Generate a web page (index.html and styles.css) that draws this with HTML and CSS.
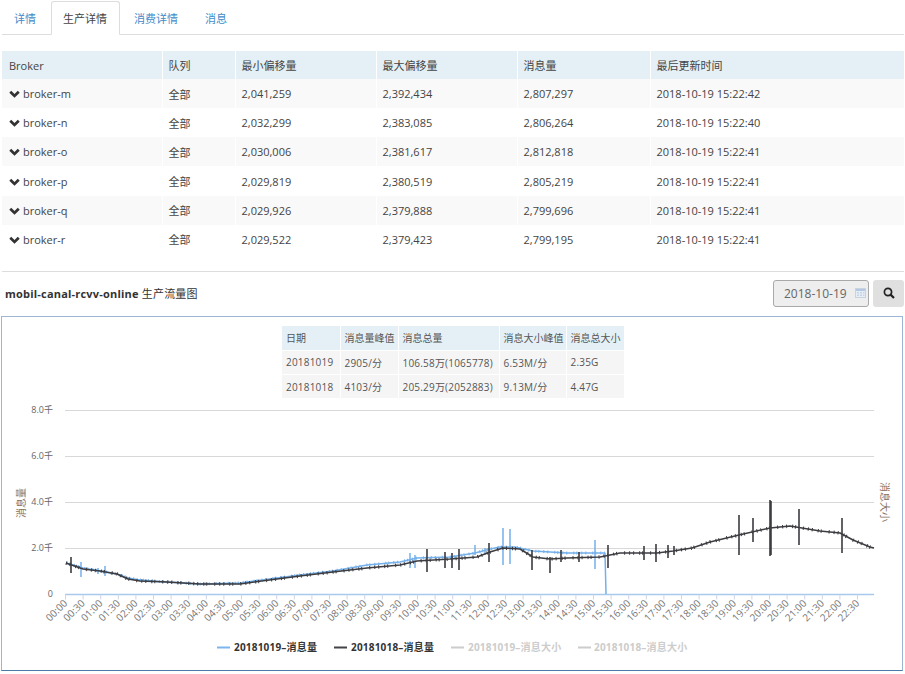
FILE: index.html
```html
<!DOCTYPE html>
<html lang="zh">
<head>
<meta charset="utf-8">
<title>生产详情</title>
<link rel="stylesheet" href="styles.css">
</head>
<body>
<ul class="tabs">
  <li class="tab"><a>详情</a></li>
  <li class="tab active"><a>生产详情</a></li>
  <li class="tab"><a>消费详情</a></li>
  <li class="tab"><a>消息</a></li>
</ul>
<table class="brokers">
  <colgroup><col class="c1"><col class="c2"><col class="c3"><col class="c4"><col class="c5"><col class="c6"></colgroup>
  <thead><tr><th>Broker</th><th>队列</th><th>最小偏移量</th><th>最大偏移量</th><th>消息量</th><th>最后更新时间</th></tr></thead>
  <tbody>
    <tr><td><svg class="chev" viewBox="0 0 11 8"><path d="M0.300 2.700 2.200 0.800 5.500 4 8.800 0.800 10.700 2.700 5.500 7.800z"/></svg>broker-m</td><td>全部</td><td>2,041,259</td><td>2,392,434</td><td>2,807,297</td><td>2018-10-19 15:22:42</td></tr>
    <tr><td><svg class="chev" viewBox="0 0 11 8"><path d="M0.300 2.700 2.200 0.800 5.500 4 8.800 0.800 10.700 2.700 5.500 7.800z"/></svg>broker-n</td><td>全部</td><td>2,032,299</td><td>2,383,085</td><td>2,806,264</td><td>2018-10-19 15:22:40</td></tr>
    <tr><td><svg class="chev" viewBox="0 0 11 8"><path d="M0.300 2.700 2.200 0.800 5.500 4 8.800 0.800 10.700 2.700 5.500 7.800z"/></svg>broker-o</td><td>全部</td><td>2,030,006</td><td>2,381,617</td><td>2,812,818</td><td>2018-10-19 15:22:41</td></tr>
    <tr><td><svg class="chev" viewBox="0 0 11 8"><path d="M0.300 2.700 2.200 0.800 5.500 4 8.800 0.800 10.700 2.700 5.500 7.800z"/></svg>broker-p</td><td>全部</td><td>2,029,819</td><td>2,380,519</td><td>2,805,219</td><td>2018-10-19 15:22:41</td></tr>
    <tr><td><svg class="chev" viewBox="0 0 11 8"><path d="M0.300 2.700 2.200 0.800 5.500 4 8.800 0.800 10.700 2.700 5.500 7.800z"/></svg>broker-q</td><td>全部</td><td>2,029,926</td><td>2,379,888</td><td>2,799,696</td><td>2018-10-19 15:22:41</td></tr>
    <tr><td><svg class="chev" viewBox="0 0 11 8"><path d="M0.300 2.700 2.200 0.800 5.500 4 8.800 0.800 10.700 2.700 5.500 7.800z"/></svg>broker-r</td><td>全部</td><td>2,029,522</td><td>2,379,423</td><td>2,799,195</td><td>2018-10-19 15:22:41</td></tr>
  </tbody>
</table>
<div class="toolbar">
  <div class="title"><b>mobil-canal-rcvv-online</b> 生产流量图</div>
  <div class="controls">
    <div class="date">
      <span>2018-10-19</span>
      <svg class="cal" viewBox="0 0 11 10"><rect x="0.5" y="0.5" width="10" height="9" fill="#e8eef6" stroke="#c9d3e0"/><rect x="1" y="1" width="9" height="2" fill="#b3c8e2"/><path d="M2 4h2v1.500h-2zM5 4h2v1.500h-2zM8 4h1.500v1.500h-1.500zM2 6.500h2v1.500h-2zM5 6.500h2v1.500h-2zM8 6.500h1.500v1.500h-1.500z" fill="#c4d4e8"/></svg>
    </div>
    <button class="search" type="button"><svg viewBox="0 0 12 12"><circle cx="5" cy="5" r="3.600" fill="none" stroke="#222" stroke-width="1.700"/><path d="M7.600 7.600 11 11" stroke="#222" stroke-width="2.200" fill="none"/></svg></button>
  </div>
</div>
<section class="panel">
  <table class="stats">
    <colgroup><col class="s1"><col class="s2"><col class="s3"><col class="s4"><col class="s5"></colgroup>
    <thead><tr><th>日期</th><th>消息量峰值</th><th>消息总量</th><th>消息大小峰值</th><th>消息总大小</th></tr></thead>
    <tbody>
      <tr><td>20181019</td><td>2905/分</td><td>106.58万(1065778)</td><td>6.53M/分</td><td>2.35G</td></tr>
      <tr><td>20181018</td><td>4103/分</td><td>205.29万(2052883)</td><td>9.13M/分</td><td>4.47G</td></tr>
    </tbody>
  </table>
  <svg class="chart" viewBox="2 399 900 271">
    <path class="grid" d="M65 410.500H874M65 456.500H874M65 502.500H874M65 548.500H874"/>
    <path class="axis" d="M65 594.500H874"/>
    <line class="ticks" x1="65" y1="597" x2="874" y2="597"/>

    <text class="ylab" x="53" y="413">8.0千</text>
    <text class="ylab" x="53" y="459">6.0千</text>
    <text class="ylab" x="53" y="505">4.0千</text>
    <text class="ylab" x="53" y="551">2.0千</text>
    <text class="ylab" x="53" y="597">0</text>
    <text class="yname" transform="translate(25 503) rotate(-90)">消息量</text>
    <text class="yname" transform="translate(881 502) rotate(90)">消息大小</text>

    <path class="blue" d="M66 563 83 568 100 571 117 574 128 578 140 580 167 582 200 584 240 583 277 578 300 575 333 571 367 565 400 562 417 558 450 557 475 553 490 549 500 547 515 547 533 551 550 552 567 553 590 553 605 553 606 594"/>
    <path class="blue fuzz" d="M66 563 83 568 100 571 117 574 128 578 140 580 167 582 200 584 240 583 277 578 300 575 333 571 367 565 400 562 417 558 450 557 475 553 490 549 500 547 515 547 533 551 550 552 567 553 590 553 605 553"/>
    <path class="bluespike" d="M81 562V577M105 566V576M98 568V574M410 553V568M415 555V568M475 545V555M485 548V555M503 528V565M510 529V564M595 540V569"/>
    <path class="black" d="M66 563 83 569 100 571 117 574 128 579 140 581 167 582 200 584 240 584 277 579 300 576 333 572 367 568 400 565 417 561 450 559 477 557 490 552 503 548 520 549 533 557 550 559 567 558 600 557 620 553 657 553 673 551 692 548 710 542 739 535 770 528 790 526 820 531 840 533 853 540 870 547 874 548"/>
    <path class="black fuzz" d="M66 563 83 569 100 571 117 574 128 579 140 581 167 582 200 584 240 584 277 579 300 576 333 572 367 568 400 565 417 561 450 559 477 557 490 552 503 548 520 549 533 557 550 559 567 558 600 557 620 553 657 553 673 551 692 548 710 542 739 535 770 528 790 526 820 531 840 533 853 540 870 547 874 548"/>
    <path class="spike" d="M71 557V573M427 549V572M445 552V568M452 553V568M459 549V570M489 543V562M532 550V570M550 557V573M561 550V562M579 552V562M608 545V568M644 546V560M656 544V562M668 545V558M674 546V555M739 515V555M753 518V542M770 500V556M771 501V555M799 509V545M842 518V553"/>

    <g class="xlabels">
      <text transform="translate(68 604) rotate(-45)">00:00</text>
      <text transform="translate(85.600 604) rotate(-45)">00:30</text>
      <text transform="translate(103.200 604) rotate(-45)">01:00</text>
      <text transform="translate(120.800 604) rotate(-45)">01:30</text>
      <text transform="translate(138.400 604) rotate(-45)">02:00</text>
      <text transform="translate(156 604) rotate(-45)">02:30</text>
      <text transform="translate(173.600 604) rotate(-45)">03:00</text>
      <text transform="translate(191.200 604) rotate(-45)">03:30</text>
      <text transform="translate(208.800 604) rotate(-45)">04:00</text>
      <text transform="translate(226.400 604) rotate(-45)">04:30</text>
      <text transform="translate(244 604) rotate(-45)">05:00</text>
      <text transform="translate(261.600 604) rotate(-45)">05:30</text>
      <text transform="translate(279.200 604) rotate(-45)">06:00</text>
      <text transform="translate(296.800 604) rotate(-45)">06:30</text>
      <text transform="translate(314.400 604) rotate(-45)">07:00</text>
      <text transform="translate(332 604) rotate(-45)">07:30</text>
      <text transform="translate(349.600 604) rotate(-45)">08:00</text>
      <text transform="translate(367.200 604) rotate(-45)">08:30</text>
      <text transform="translate(384.800 604) rotate(-45)">09:00</text>
      <text transform="translate(402.400 604) rotate(-45)">09:30</text>
      <text transform="translate(420 604) rotate(-45)">10:00</text>
      <text transform="translate(437.600 604) rotate(-45)">10:30</text>
      <text transform="translate(455.200 604) rotate(-45)">11:00</text>
      <text transform="translate(472.800 604) rotate(-45)">11:30</text>
      <text transform="translate(490.400 604) rotate(-45)">12:00</text>
      <text transform="translate(508 604) rotate(-45)">12:30</text>
      <text transform="translate(525.600 604) rotate(-45)">13:00</text>
      <text transform="translate(543.200 604) rotate(-45)">13:30</text>
      <text transform="translate(560.800 604) rotate(-45)">14:00</text>
      <text transform="translate(578.400 604) rotate(-45)">14:30</text>
      <text transform="translate(596 604) rotate(-45)">15:00</text>
      <text transform="translate(613.600 604) rotate(-45)">15:30</text>
      <text transform="translate(631.200 604) rotate(-45)">16:00</text>
      <text transform="translate(648.800 604) rotate(-45)">16:30</text>
      <text transform="translate(666.400 604) rotate(-45)">17:00</text>
      <text transform="translate(684 604) rotate(-45)">17:30</text>
      <text transform="translate(701.600 604) rotate(-45)">18:00</text>
      <text transform="translate(719.200 604) rotate(-45)">18:30</text>
      <text transform="translate(736.800 604) rotate(-45)">19:00</text>
      <text transform="translate(754.400 604) rotate(-45)">19:30</text>
      <text transform="translate(772 604) rotate(-45)">20:00</text>
      <text transform="translate(789.600 604) rotate(-45)">20:30</text>
      <text transform="translate(807.200 604) rotate(-45)">21:00</text>
      <text transform="translate(824.800 604) rotate(-45)">21:30</text>
      <text transform="translate(842.400 604) rotate(-45)">22:00</text>
      <text transform="translate(860 604) rotate(-45)">22:30</text>
    </g>

    <path class="lg-blue" d="M217 647.500H230"/>
    <text class="legend" x="234" y="651">20181019–消息量</text>
    <path class="lg-black" d="M334 647.500H347"/>
    <text class="legend" x="351" y="651">20181018–消息量</text>
    <path class="lg-off" d="M451 647.500H464M578 647.500H591"/>
    <text class="legend off" x="468" y="651">20181019–消息大小</text>
    <text class="legend off" x="594" y="651">20181018–消息大小</text>
  </svg>
</section>
</body>
</html>
```
FILE: styles.css
```css
* { box-sizing: border-box; }
html, body { margin: 0; padding: 0; }
body {
  width: 905px;
  height: 674px;
  overflow: hidden;
  background: #fff;
  color: #444;
  font: 11px "Open Sans", "Noto Sans CJK SC", sans-serif;
}
.tabs {
  display: flex;
  list-style: none;
  margin: 0 1px 0 2px;
  padding: 1px 0 0;
  height: 35px;
  border-bottom: 1px solid #ddd;
}
.tab { height: 34px; margin-right: 2px; }
.tab a {
  display: block;
  height: 34px;
  padding: 0 12px 0 11px;
  line-height: 34px;
  color: #428bca;
  border: 1px solid transparent;
}
.tab.active a {
  color: #444;
  background: #fff;
  border-color: #ddd #ddd #fff;
  border-radius: 3px 3px 0 0;
}
.brokers {
  table-layout: fixed;
  border-collapse: collapse;
  width: 902px;
  margin: 16px 0 0 2px;
}
.c1 { width: 160px; }
.c2 { width: 73px; }
.c3 { width: 141px; }
.c4 { width: 141px; }
.c5 { width: 133px; }
.c6 { width: 254px; }
.brokers th, .brokers td {
  height: 29.170px;
  padding: 0 5px 0 6px;
  border-left: 1px solid #fff;
  font-weight: 400;
  text-align: left;
  white-space: nowrap;
}
.brokers th:first-child, .brokers td:first-child { border-left: 0; padding-left: 7px; }
.brokers th { height: 28px; background: #e4f0f5; }
.brokers tbody tr:nth-child(odd) td { background: #f9f9f9; }
.chev {
  width: 11px;
  height: 8px;
  margin: 0 3px 2px 0;
  vertical-align: middle;
  fill: #333;
}
.toolbar {
  display: flex;
  align-items: center;
  justify-content: space-between;
  margin: 17px 1px 0 2px;
  padding: 8px 0 0 3px;
  border-top: 1px solid #ddd;
}
.title { color: #333; letter-spacing: 0.2px; }
.controls { display: flex; gap: 4px; }
.date {
  display: flex;
  align-items: center;
  justify-content: space-between;
  width: 96px;
  height: 27px;
  padding: 0 2px 0 10px;
  border: 1px solid #a9a9a9;
  border-radius: 3px;
  background: #eee;
  color: #666;
  font-size: 12px;
}
.cal { width: 11px; height: 10px; }
.search {
  display: flex;
  align-items: center;
  justify-content: center;
  width: 31px;
  height: 27px;
  padding: 0;
  border: 0;
  border-radius: 3px;
  background: #e0e0e0;
}
.search svg { width: 12px; height: 12px; }
.panel {
  width: 902px;
  height: 355px;
  margin: 9px 0 0 1px;
  padding-top: 9px;
  border: 1px solid #9db6d4;
  border-bottom-color: #4a7aa8;
}
.stats {
  table-layout: fixed;
  border-collapse: collapse;
  width: 342px;
  margin: 0 0 0 280px;
  font-size: 10px;
  letter-spacing: 0.2px;
  color: #555;
}
.s1 { width: 58px; }
.s2 { width: 58px; }
.s3 { width: 101px; }
.s4 { width: 67px; }
.s5 { width: 58px; }
.stats th, .stats td {
  height: 24.300px;
  padding: 0 4px;
  border-left: 1px solid #fff;
  border-bottom: 1px solid #fff;
  font-weight: 400;
  text-align: left;
  white-space: nowrap;
}
.stats th { letter-spacing: 0; }
.stats th:first-child, .stats td:first-child { border-left: 0; }
.stats th { background: #e4f0f5; }
.stats td { background: #f5f5f5; }
.chart { display: block; width: 900px; height: 271px; }
.chart text { font-family: "Open Sans", "Noto Sans CJK SC", sans-serif; }
.grid { stroke: #d8d8d8; stroke-width: 1; fill: none; }
.axis { stroke: #a8c8ec; stroke-width: 1.500; fill: none; }
.ticks { stroke: #ccd6eb; stroke-width: 5; stroke-dasharray: 1 16.600; }
.ylab { font-size: 9px; fill: #666; text-anchor: end; }
.yname { font-size: 10px; fill: #8a735f; text-anchor: middle; }
.blue { fill: none; stroke: #74b0ea; stroke-width: 1.500; stroke-linejoin: bevel; }
.black { fill: none; stroke: #3c3c41; stroke-width: 1.500; stroke-linejoin: bevel; }
.blue.fuzz { stroke-width: 3; stroke-dasharray: 1 2 1 4 1 3 1 6; }
.black.fuzz { stroke-width: 3.500; stroke-dasharray: 1 3 1 5 1 2 1 7 1 4; }
.bluespike { fill: none; stroke: #74b0ea; stroke-width: 1.500; }
.spike { fill: none; stroke: #3c3c41; stroke-width: 1.600; }
.xlabels text { font-size: 10px; fill: #777; text-anchor: end; }
.legend { font-size: 10px; font-weight: 700; fill: #333; letter-spacing: 0.2px; }
.legend.off { fill: #ccc; }
.lg-blue { stroke: #7cb5ec; stroke-width: 2; }
.lg-black { stroke: #434348; stroke-width: 2; }
.lg-off { stroke: #ccc; stroke-width: 2; }
```
